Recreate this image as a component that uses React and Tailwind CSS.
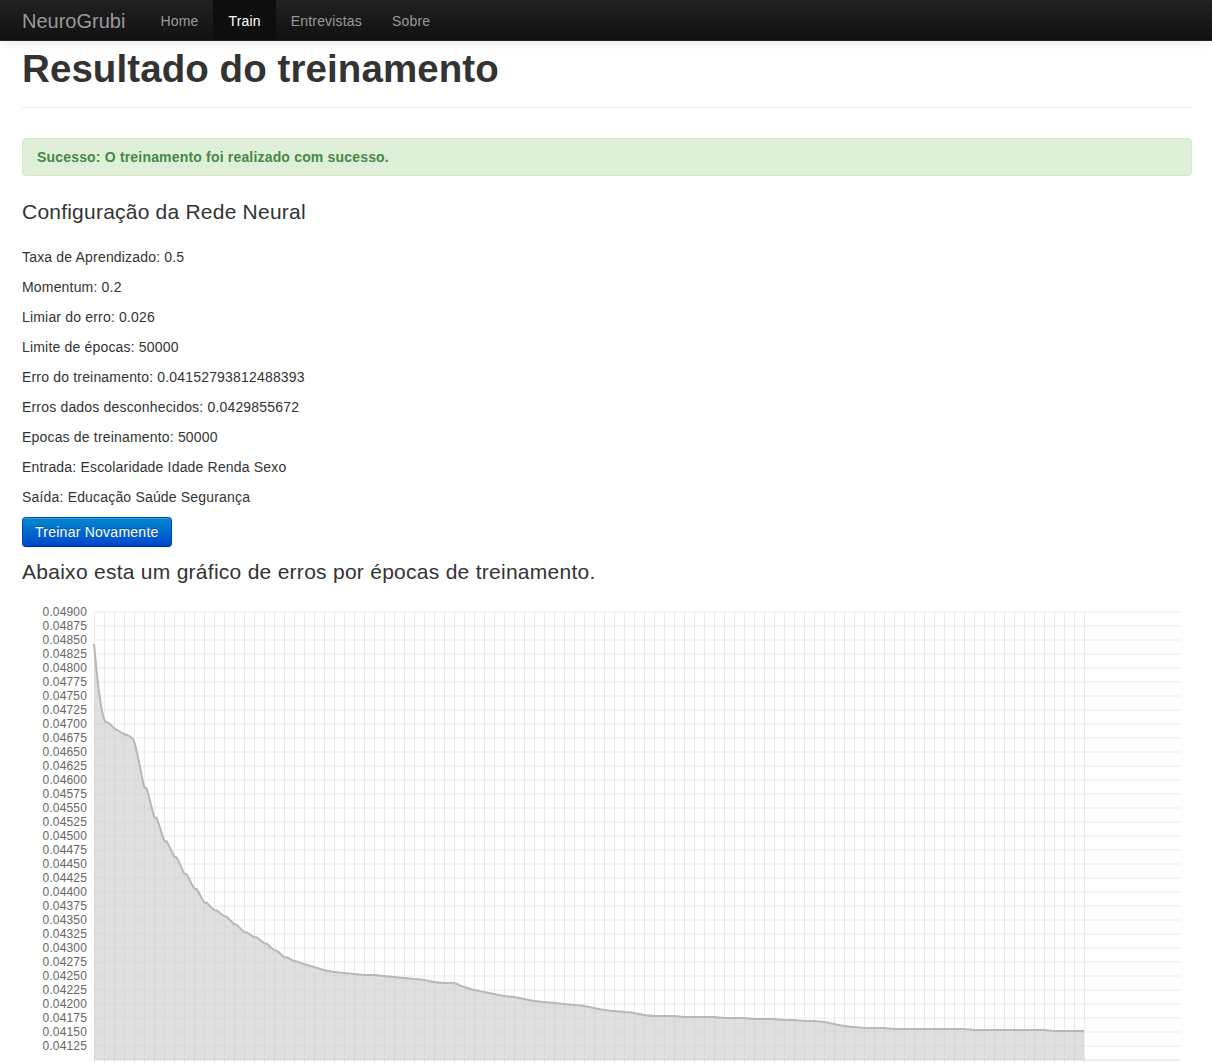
import React from "react";

const base = [
  [94, 644], [99, 692], [104, 719], [109, 723], [114, 728], [119, 731], [124, 734], [129, 736], [134, 741], [139, 762], [144, 786], [154, 816], [164, 840],
  [174, 856], [184, 873], [194, 888], [204, 902], [214, 910], [224, 916], [234, 924], [244, 932],
  [254, 937], [264, 943], [274, 950], [284, 957], [294, 961], [304, 964], [314, 967], [324, 970],
  [334, 972], [344, 973], [354, 974], [364, 975], [374, 975], [384, 976], [394, 977], [404, 978],
  [414, 979], [424, 980], [434, 982], [444, 983], [454, 983], [464, 987], [474, 990], [484, 992],
  [494, 994], [504, 996], [514, 997], [524, 999], [534, 1001], [544, 1002], [554, 1003], [564, 1004],
  [574, 1005], [584, 1006], [594, 1008], [604, 1010], [614, 1011], [624, 1012], [634, 1013], [644, 1015],
  [654, 1016], [664, 1016], [674, 1016], [684, 1017], [694, 1017], [704, 1017], [714, 1017], [724, 1018],
  [734, 1018], [744, 1018], [754, 1019], [764, 1019], [774, 1019], [784, 1020], [794, 1020], [804, 1021],
  [814, 1021], [824, 1022], [834, 1024], [844, 1026], [854, 1027], [864, 1028], [874, 1028], [884, 1028],
  [894, 1029], [904, 1029], [914, 1029], [924, 1029], [934, 1029], [944, 1029], [954, 1029], [964, 1029],
  [974, 1030], [984, 1030], [994, 1030], [1004, 1030], [1014, 1030], [1024, 1030], [1034, 1030], [1044, 1030],
  [1054, 1031], [1064, 1031], [1074, 1031], [1084, 1031],
];

const raw = [];
for (let i = 0; i < base.length; i++) {
  raw.push(base[i]);
  const [x, y] = base[i];
  const next = base[i + 1];
  if (next && x >= 144 && x < 304 && next[0] - x === 10) {
    raw.push([x + 3, y + (next[1] - y) * 0.12]);
  }
}
const pts = raw.map(([x, y]) => [x - 22, y - 600]);

function curvePath(p) {
  let d = `M${p[0][0]},${p[0][1]}`;
  for (let i = 0; i < p.length - 1; i++) {
    const p0 = p[i - 1] || p[i];
    const p1 = p[i];
    const p2 = p[i + 1];
    const p3 = p[i + 2] || p2;
    const t = 0.16;
    const c1x = p1[0] + (p2[0] - p0[0]) * t;
    const c1y = p1[1] + (p2[1] - p0[1]) * t;
    const c2x = p2[0] - (p3[0] - p1[0]) * t;
    const c2y = p2[1] - (p3[1] - p1[1]) * t;
    d += ` C${c1x.toFixed(2)},${c1y.toFixed(2)} ${c2x.toFixed(2)},${c2y.toFixed(2)} ${p2[0]},${p2[1]}`;
  }
  return d;
}

const line = curvePath(pts);
const bottom = 460;
const fill = `${line} L${pts[pts.length - 1][0]},${bottom} L${pts[0][0]},${bottom} Z`;

const labels = [];
for (let i = 0; i < 32; i++) {
  labels.push((0.049 - i * 0.00025).toFixed(5));
}

function Chart() {
  return (
    <svg width="1170" height="470" className="block mt-[8px]" style={{ overflow: "visible" }}>
      {labels.map((l, i) => (
        <g key={l}>
          <line x1="72" x2="1158" y1={12 + i * 14} y2={12 + i * 14} stroke="#f2f2f2" strokeWidth="1.5" />
          <text
            x="65"
            y={12 + i * 14}
            textAnchor="end"
            dominantBaseline="central"
            fontSize="12"
            fill="#666"
            letterSpacing="0.15"
            fontFamily="'Liberation Sans', Arial, sans-serif"
          >
            {l}
          </text>
        </g>
      ))}
      <line x1="72" x2="1158" y1={bottom} y2={bottom} stroke="#e8e8e8" strokeWidth="1.5" />
      {Array.from({ length: 100 }).map((_, k) => (
        <line key={k} x1={72.5 + k * 10} x2={72.5 + k * 10} y1="12" y2="470" stroke="#e9e9e9" strokeWidth="1" />
      ))}
      <path d={fill} fill="#c4c4c4" fillOpacity="0.55" />
      <path d={line} fill="none" stroke="#b8b8b8" strokeWidth="2" />
    </svg>
  );
}

const rows = [
  "Taxa de Aprendizado: 0.5",
  "Momentum: 0.2",
  "Limiar do erro: 0.026",
  "Limite de épocas: 50000",
  "Erro do treinamento: 0.04152793812488393",
  "Erros dados desconhecidos: 0.0429855672",
  "Epocas de treinamento: 50000",
  "Entrada: Escolaridade Idade Renda Sexo",
  "Saída: Educação Saúde Segurança",
];

export default function App() {
  return (
    <div className="min-h-[1063px] bg-white text-[#333] text-[14px] leading-[20px] tracking-[0.18px] font-['Liberation_Sans',Arial,sans-serif]">
      <nav className="h-[41px] bg-gradient-to-b from-[#222222] to-[#111111] border-b border-[#252525] shadow-[0_1px_10px_rgba(0,0,0,0.1)] relative z-10">
        <div className="flex h-[40px] pl-[22px]">
          <a className="text-[20px] leading-[40px] pt-[1px] tracking-normal text-[#999] pr-[20px] cursor-pointer">NeuroGrubi</a>
          <a className="px-[15px] leading-[40px] pt-[1px] text-[#999]">Home</a>
          <a className="px-[15px] leading-[40px] pt-[1px] text-white bg-[#0e0e0e]">Train</a>
          <a className="px-[15px] leading-[40px] pt-[1px] text-[#999]">Entrevistas</a>
          <a className="px-[15px] leading-[40px] pt-[1px] text-[#999]">Sobre</a>
        </div>
      </nav>
      <div className="ml-[22px] w-[1170px]">
        <div className="mt-[8px] pb-[18px] border-b border-[#eeeeee]">
          <h1 className="text-[38.5px] leading-[40px] font-bold tracking-[0.08px] text-[#333]">Resultado do treinamento</h1>
        </div>
        <div className="mt-[30px] bg-[#dff0d8] border border-[#d6e9c6] rounded-[4px] text-[#468847] font-bold py-[8px] pl-[14px]">
          Sucesso: O treinamento foi realizado com sucesso.
        </div>
        <h3 className="mt-[16px] text-[21px] leading-[40px] tracking-[0.22px]">Configuração da Rede Neural</h3>
        <div className="mt-[15px]">
          {rows.map((r) => (
            <p key={r} className="mb-[10px]">{r}</p>
          ))}
        </div>
        <button className="h-[30px] px-[12px] rounded-[4px] text-white tracking-[0.25px] bg-gradient-to-b from-[#0088cc] to-[#0044cc] border border-[#0044cc] border-b-[#002a80] [text-shadow:0_-1px_0_rgba(0,0,0,0.25)] shadow-[inset_0_1px_0_rgba(255,255,255,0.2),0_1px_2px_rgba(0,0,0,0.05)]">
          Treinar Novamente
        </button>
        <h3 className="mt-[5px] text-[21px] leading-[40px] tracking-[0.27px]">Abaixo esta um gráfico de erros por épocas de treinamento.</h3>
        <Chart />
      </div>
    </div>
  );
}
